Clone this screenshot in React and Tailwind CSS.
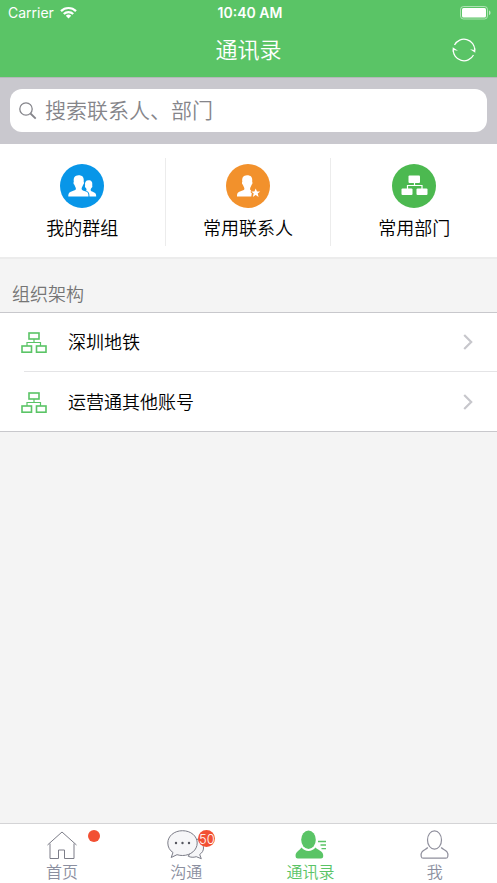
import React from "react";

function WifiIcon() {
  return (
    <svg width="17" height="13" viewBox="0 0 17 13" aria-hidden="true">
      <g fill="none" stroke="#fff" strokeWidth="2.2">
        <path d="M1 5.1a10.6 10.6 0 0 1 15 0" />
        <path d="M3.8 8a6.6 6.6 0 0 1 9.4 0" />
      </g>
      <path d="M5.8 9.8a3.9 3.9 0 0 1 5.4 0l-2.7 2.7z" fill="#fff" />
    </svg>
  );
}

function BatteryIcon() {
  return (
    <svg width="32" height="14" viewBox="0 0 32 14" aria-hidden="true">
      <rect x="0.5" y="0.5" width="27" height="12.5" rx="3" fill="none" stroke="#fff" strokeOpacity="0.5" />
      <rect x="2" y="2" width="24" height="9.5" rx="1.5" fill="#fff" />
      <path d="M29 4.5c2 .5 2 4 0 4.500z" fill="#fff" fillOpacity="0.6" />
    </svg>
  );
}

function RefreshIcon() {
  return (
    <svg width="24" height="24" viewBox="0 0 24 24" aria-hidden="true">
      <g fill="none" stroke="#fff" strokeWidth="1.2">
        <path d="M2.500 7A10.700 10.700 0 0 1 22.700 12.500" />
        <path d="M21.500 17A10.700 10.700 0 0 1 1.300 11.500" />
      </g>
      <path d="M18 11.300l5.300 3.500v-5.500l-.8 2.700zM.7 14.700V9.200l5.300 3.500-4.500-.700z" fill="#fff" />
    </svg>
  );
}

function SearchIcon() {
  return (
    <svg width="18" height="18" viewBox="0 0 18 18" fill="none" stroke="#85858b" aria-hidden="true">
      <circle cx="7" cy="7" r="6.200" strokeWidth="1.300" />
      <path d="M11.500 11.500l5.200 5.200" strokeWidth="1.800" />
    </svg>
  );
}

function GroupIcon() {
  return (
    <svg width="44" height="44" viewBox="0 0 44 44" aria-hidden="true">
      <circle cx="22" cy="22" r="22" fill="#0896e8" />
      <path
        d="M8.300 32.500c0-3.500 1-4.300 3.200-5.100 2.700-1 4.300-1.300 4.400-2.500.1-1.200-1-2.300-1.500-4.200-.9-.3-1.200-2.300-.6-3-.5-4.200 1-6.400 4.700-6.500 4 0 5.700 2 5.200 6.500.6.700.2 2.700-.6 3-.5 1.900-1.600 3-1.500 4.200.1 1.200 2 1.700 4.300 2.600 2.100.8 2.600 1.600 2.600 5z"
        fill="#fff"
      />
      <path
        d="M29.500 32.500c0-3.300-.6-4.800-3.400-5.800.7-.5.6-1.700-.2-2.800-.9-.5-1.200-1.700-.8-2.400-.5-3.200.6-5.200 3.500-5.200 3 0 4.100 2 3.600 5.100.4.700.1 2-.6 2.300-.8 1.500-1 1.400-.9 2.500.1.900 1 1.200 2.500 1.700 2.300.8 3 1.600 3 4.600z"
        fill="#fff"
      />
    </svg>
  );
}

function FavoriteContactIcon() {
  return (
    <svg width="44" height="44" viewBox="0 0 44 44" aria-hidden="true">
      <circle cx="22" cy="22" r="22" fill="#f2912c" />
      <path
        d="M11 32.500c0-3.500.8-4.300 3-5.100 2.700-1 4.300-1.300 4.400-2.500.1-1.200-1-2.300-1.500-4.200-.9-.3-1.200-2.300-.6-3-.5-4.200 1-6.400 4.700-6.500 4 0 5.700 2 5.200 6.500.6.700.2 2.700-.6 3-.5 1.900-1.600 3-1.500 4.200 0 .8.500 1.200 1 1.400l-.5 1.900 1.200 1-.5 3.300z"
        fill="#fff"
      />
      <path
        d="M29.700 24.500l1.300 3h3.200l-2.500 2.100.9 3.300-2.900-1.900-2.900 1.900.9-3.300-2.500-2.100h3.200z"
        fill="#fff"
      />
    </svg>
  );
}

function DepartmentIcon() {
  return (
    <svg width="44" height="44" viewBox="0 0 44 44" aria-hidden="true">
      <circle cx="22" cy="22" r="22" fill="#4cb950" />
      <g fill="#fff">
        <rect x="16.500" y="11.500" width="11.500" height="7.500" rx="1" />
        <rect x="9.500" y="24.500" width="11" height="6.500" rx="1" />
        <rect x="24.500" y="24.500" width="11" height="6.500" rx="1" />
      </g>
      <path d="M22.500 18v3.500M15.500 25v-3.500h14.500v3.500" fill="none" stroke="#fff" strokeWidth="1.200" />
    </svg>
  );
}

function TreeIcon() {
  return (
    <svg width="26" height="22" viewBox="0 0 26 22" fill="none" stroke="#5ac466" aria-hidden="true">
      <g strokeWidth="1.600">
        <rect x="8" y="1" width="10" height="6" />
        <rect x="1" y="14" width="9.500" height="6.200" />
        <rect x="15.500" y="14" width="9.500" height="6.200" />
      </g>
      <path d="M13 7v3.500M6 14v-3.500h13.500v3.500" strokeWidth="1.200" />
    </svg>
  );
}

function Chevron() {
  return (
    <svg width="10" height="18" viewBox="0 0 10 18" fill="none" stroke="#c7c7cc" strokeWidth="2.200" aria-hidden="true">
      <path d="M1.200 1l7 7-7 7" />
    </svg>
  );
}

function HomeIcon() {
  return (
    <svg width="38" height="30" viewBox="0 0 38 30" fill="none" stroke="#7c7d88" aria-hidden="true">
      <path d="M4.500 15L19 2l14.500 13" />
      <path d="M7 13.500v15h8.500v-8.500h6v8.500H31v-15" />
    </svg>
  );
}

function ChatIcon() {
  return (
    <svg width="38" height="30" viewBox="0 0 38 30" aria-hidden="true">
      <g fill="#f6f6f8" stroke="#7c7d88" strokeLinejoin="round">
        <path d="M30 9c4 2 6.500 5 6.500 9 0 2.700-1.400 4.800-3.800 6.500l1.600 4.200-5-2c-3 .9-5.500.7-8-.4z" />
        <path d="M15.500.7C7.300.7.800 6 .800 13c0 4.200 2.200 7.700 5.200 9.500L4.200 27.500l5.800-2.800c2 .6 3.700.8 5.500.8 8.200 0 14.700-5.500 14.700-12.500S23.700.7 15.500.7z" />
      </g>
      <g fill="#55565f">
        <circle cx="9" cy="13" r="1.200" />
        <circle cx="15.500" cy="13" r="1.200" />
        <circle cx="22" cy="13" r="1.200" />
      </g>
    </svg>
  );
}

function ContactsIcon() {
  return (
    <svg width="38" height="30" viewBox="0 0 38 30" aria-hidden="true">
      <g fill="#5ac466">
        <ellipse cx="16.500" cy="9.800" rx="7.300" ry="9.200" />
        <path d="M9.500 17.500c3.500 4.600 10.500 4.600 14 0 1.700 1.800 3.700 2.300 5.700 4 2 1.700 2.100 3.300 2 4.700-.1 1.500-.9 2.200-2.200 2.200H5.800c-1.300 0-2.100-.7-2.200-2.200-.1-1.400 0-3 1.900-4.700 1.500-1.300 2.500-2 4-4z" />
      </g>
      <path d="M26 11.500H34M28.500 15H34M29.500 18.700H34" stroke="#5ac466" strokeWidth="1.300" />
    </svg>
  );
}

function ProfileIcon() {
  return (
    <svg width="38" height="30" viewBox="0 0 38 30" fill="none" stroke="#8f8f9c" strokeWidth="1.200" aria-hidden="true">
      <ellipse cx="18.500" cy="10" rx="7" ry="9.200" />
      <path d="M11.800 17.500c-1.500 1.700-4.200 2.300-5.800 4.300-1.100 1.400-1.100 3-.8 4.700.2 1 .8 1.700 2 1.700h22.600c1.200 0 1.800-.7 2-1.700.3-1.700.3-3.300-.8-4.700-1.600-2-4.300-2.600-5.800-4.300" />
    </svg>
  );
}

const shortcuts = [
  { label: "我的群组", Icon: GroupIcon },
  { label: "常用联系人", Icon: FavoriteContactIcon },
  { label: "常用部门", Icon: DepartmentIcon },
];

const organizations = ["深圳地铁", "运营通其他账号"];

const tabs = [
  { label: "首页", Icon: HomeIcon, dot: true },
  { label: "沟通", Icon: ChatIcon, count: 50 },
  { label: "通讯录", Icon: ContactsIcon, active: true },
  { label: "我", Icon: ProfileIcon },
];

export default function App() {
  return (
    <div className="flex min-h-screen flex-col bg-[#f4f4f4] font-['Inter','Noto_Sans_CJK_SC',sans-serif] font-[350] text-black">
      <header className="bg-[#5ac466] pb-[2px] text-white">
        <div className="grid h-[25px] grid-cols-3 items-center pl-2 pr-[5px] text-[14px] leading-5 font-normal">
          <div className="flex items-center gap-[6px]">
            <span>Carrier</span>
            <WifiIcon />
          </div>
          <span className="text-center font-semibold">10:40 AM</span>
          <div className="flex justify-end">
            <BatteryIcon />
          </div>
        </div>
        <div className="grid h-[50px] grid-cols-[1fr_auto_1fr] items-center px-[21px]">
          <h1 className="col-start-2 text-[22px] leading-8 font-[350]">通讯录</h1>
          <button type="button" aria-label="刷新" className="justify-self-end">
            <RefreshIcon />
          </button>
        </div>
      </header>

      <div className="border-t border-[#b4b8b8] bg-[#c9c8ce] px-[10px] pt-[11px] pb-3">
        <label className="flex h-[43px] items-center gap-2 rounded-xl bg-white px-[9px]">
          <SearchIcon />
          <input
            type="search"
            aria-label="搜索联系人、部门"
            placeholder="搜索联系人、部门"
            className="min-w-0 flex-1 bg-transparent text-[21px] leading-8 outline-none placeholder:text-[#85858a]"
          />
        </label>
      </div>

      <main className="flex-1">
        <nav className="grid grid-cols-3 border-b-2 border-[#ececec] bg-white pt-[14px] pb-[11px]">
          {shortcuts.map(({ label, Icon }) => (
            <button
              key={label}
              type="button"
              className="flex h-[88px] flex-col items-center gap-[7px] border-r border-[#ececec] pt-[6px] last:border-r-0"
            >
              <Icon />
              <span className="text-[18px] leading-7">{label}</span>
            </button>
          ))}
        </nav>

        <section>
          <h2 className="px-3 pt-[22px] pb-[3px] text-[18px] leading-7 font-[350] text-[#757575]">组织架构</h2>
          <ul className="border-y border-[#c8c8cc] bg-white">
            {organizations.map((name) => (
              <li key={name} className="group flex h-[59px] flex-col">
                <a href="#" className="flex flex-1 items-center pt-[2px] pl-[21px] pr-6">
                  <TreeIcon />
                  <span className="ml-[21px] flex-1 text-[18px] leading-7">{name}</span>
                  <Chevron />
                </a>
                <div className="ml-6 border-t border-[#e4e4e6] group-last:hidden" />
              </li>
            ))}
          </ul>
        </section>
      </main>

      <nav className="grid h-[60px] grid-cols-4 border-t border-[#d4d4d6] bg-white">
        {tabs.map(({ label, Icon, dot, count, active }) => (
          <a
            key={label}
            href="#"
            aria-current={active ? "page" : undefined}
            className={`flex flex-col items-center pt-[6px] ${active ? "text-[#5ac466]" : "text-[#8b8fa0]"}`}
          >
            <span className="relative">
              <Icon />
              {dot && <span className="absolute top-0 -right-[19px] size-3 rounded-full bg-[#f25033]" />}
              {count && (
                <span className="absolute top-0 -right-[10px] flex size-[17px] items-center justify-center rounded-full bg-[#f25033] text-[13px] leading-4 text-white">
                  {count}
                </span>
              )}
            </span>
            <span className="text-[16px] leading-6">{label}</span>
          </a>
        ))}
      </nav>
    </div>
  );
}
